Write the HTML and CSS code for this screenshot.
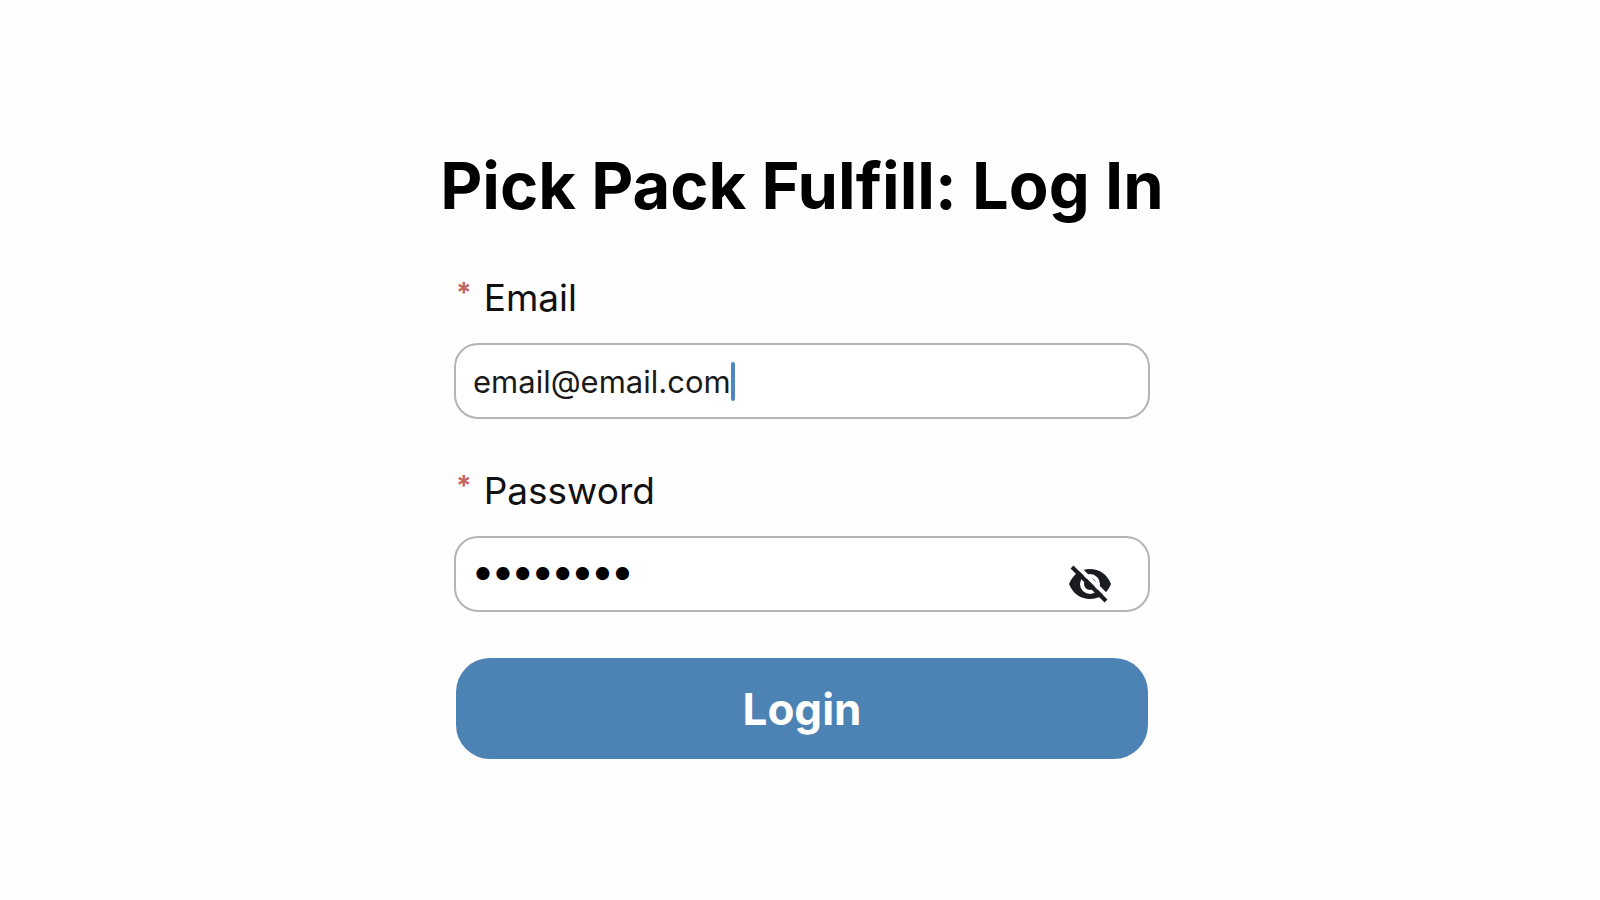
FILE: index.html
```html
<!DOCTYPE html>
<html lang="en">
<head>
    <meta charset="UTF-8">
    <meta name="viewport" content="width=device-width, initial-scale=1.0">
    <title>Pick Pack Fulfill: Log In</title>
    <link rel="stylesheet" href="styles.css">
</head>
<body>
    <main class="container">
        <h1>Pick Pack Fulfill: Log In</h1>
        <form id="loginForm">
            <div class="form-group">
                <label for="email"><span class="required">*</span>Email</label>
                <div class="field">
                    <input type="email" id="email" class="email-input" value="email@email.com" required>
                    <span class="caret"></span>
                </div>
            </div>
            <div class="form-group">
                <label for="password"><span class="required">*</span>Password</label>
                <div class="field">
                    <input type="password" id="password" class="password-input" value="password" required>
                    <button type="button" class="toggle" aria-label="Show password">
                        <svg viewBox="0 0 44 38" width="44" height="38">
                            <path d="M1 19C5 9 13 4 22 4s17 5 21 15c-4 10-12 15-21 15S5 29 1 19z" fill="#1b1c20"/>
                            <circle cx="22" cy="19" r="8" fill="none" stroke="#fff" stroke-width="4"/>
                            <path d="M22 14a5 5 0 0 1 5 5" fill="none" stroke="#1b1c20" stroke-width="2"/>
                            <path d="M8 0l34 34" stroke="#fff" stroke-width="4"/>
                            <path d="M4 2l34 34" stroke="#1b1c20" stroke-width="4"/>
                        </svg>
                    </button>
                </div>
            </div>
            <button type="submit" class="login">Login</button>
        </form>
    </main>
</body>
</html>
```
FILE: styles.css
```css
* {
    box-sizing: border-box;
}
body {
    margin: 0;
    font-family: Inter, "Liberation Sans", sans-serif;
    background-color: #fefefe;
    color: #000;
}
.container {
    display: flex;
    flex-direction: column;
    align-items: center;
    padding: 144px 20px 24px 24px;
}
h1 {
    margin: 0 0 48px;
    font-size: 65px;
    line-height: 84px;
    font-weight: 700;
    text-align: center;
}
form {
    width: 100%;
    max-width: 696px;
}
.form-group {
    margin-bottom: 50px;
}
.form-group:last-of-type {
    margin-bottom: 46px;
}
label {
    display: flex;
    gap: 12px;
    padding-left: 2px;
    margin-bottom: 24px;
    font-size: 37px;
    line-height: 43px;
    color: #111;
}
.required {
    font-size: 28px;
    line-height: 34px;
    font-weight: 700;
    color: #c4655f;
}
.field {
    display: flex;
    align-items: center;
    height: 76px;
    padding: 0 36px 0 17px;
    border: 2px solid #b4b4b4;
    border-radius: 24px;
    background-color: #fff;
}
input {
    padding: 0;
    border: none;
    outline: none;
    background: none;
    font-family: inherit;
    color: #1a1a1a;
}
.email-input {
    field-sizing: content;
    font-size: 31px;
}
.caret {
    width: 4px;
    height: 39px;
    border-radius: 2px;
    background-color: #5088bd;
}
.password-input {
    flex: 1;
    min-width: 0;
    padding-bottom: 8px;
    font-size: 42px;
    font-weight: 700;
    color: #000;
}
.toggle {
    display: flex;
    padding: 20px 0 0;
    border: none;
    background: none;
    cursor: pointer;
}
.login {
    display: block;
    width: calc(100% - 4px);
    height: 101px;
    margin: 0 auto;
    border: none;
    border-radius: 34px;
    background-color: #4c82b4;
    color: #fff;
    font-family: inherit;
    font-size: 44px;
    font-weight: 700;
    cursor: pointer;
}
```
